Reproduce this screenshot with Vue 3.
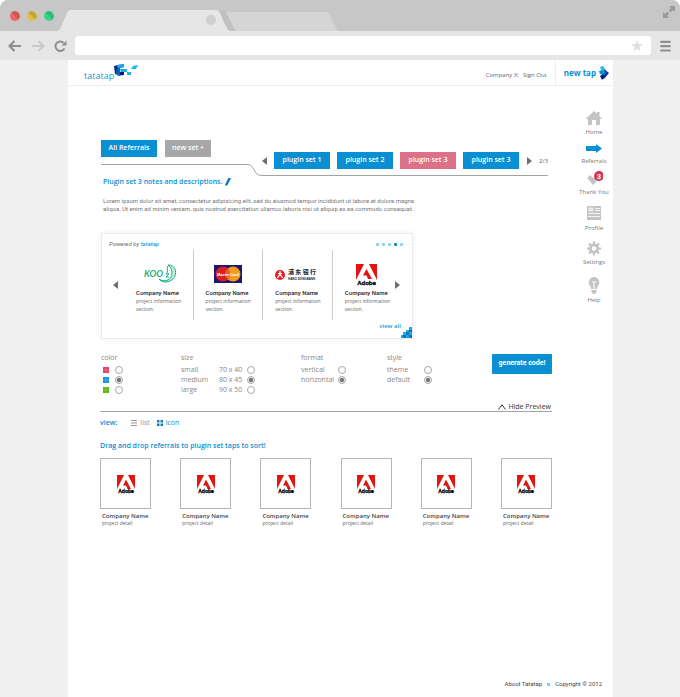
<script setup>
import { ref } from 'vue'

const activeSet = ref(2)
const sets = ['plugin set 1', 'plugin set 2', 'plugin set 3', 'plugin set 3']
const nav = ['home', 'referrals', 'thanks', 'profile', 'settings', 'help']
const navLabels = {
  home: 'Home',
  referrals: 'Referrals',
  thanks: 'Thank You',
  profile: 'Profile',
  settings: 'Settings',
  help: 'Help'
}
const companies = ['koo', 'mastercard', 'bank', 'adobe']
const colors = ['pink', 'blue', 'green']
const color = ref('blue')
const sizes = [
  { name: 'small', dim: '70 x 40' },
  { name: 'medium', dim: '80 x 45' },
  { name: 'large', dim: '90 x 50' }
]
const size = ref('medium')
const format = ref('horizontal')
const look = ref('default')
const address = ref('')
</script>

<template>
  <div class="window">
    <div class="titlebar">
      <div class="lights">
        <svg v-for="c in ['red', 'yellow', 'green']" :key="c" :class="['light', c]" viewBox="0 0 10 10">
          <circle cx="5" cy="5" r="5" />
          <path d="M1.5 1.5A5 5 0 0 1 8.5 8.5Z" fill="#000" opacity=".13" />
        </svg>
      </div>
      <svg class="tabs" viewBox="0 0 282 21">
        <path d="M168 2H269Q272 2 273 5L279 18Q280 21 282 21H168Z" fill="#d5d5d5" />
        <path d="M159 0H165Q168 0 170 4L177 18Q178 21 181 21H172Z" fill="#c1c1c1" />
        <path d="M0 21Q3 20 4 17L10 3Q11 0 14 0H159Q162 0 163 3L169 17Q170 20 173 21Z" fill="#e6e6e6" />
        <circle cx="154" cy="10" r="5" fill="#cfcfcf" />
      </svg>
      <svg class="expand" viewBox="0 0 12 12" fill="#999">
        <path d="M6 0H12V6L10 4L7.800 6.200L5.800 4.200L8 2ZM0 6L2 8L4.200 5.800L6.200 7.800L4 10L6 12H0Z" />
      </svg>
    </div>

    <div class="toolbar">
      <button class="tool" aria-label="Back">
        <svg viewBox="0 0 13 12" fill="none" stroke="#8f8f8f" stroke-width="2.200"><path d="M6.500 1L1.500 6L6.500 11M2 6H13" /></svg>
      </button>
      <button class="tool forward" aria-label="Forward">
        <svg viewBox="0 0 13 12" fill="none" stroke="#cacaca" stroke-width="2.200"><path d="M6.500 1L11.500 6L6.500 11M11 6H0" /></svg>
      </button>
      <button class="tool reload" aria-label="Reload">
        <svg viewBox="0 0 13 12"><path d="M10.500 8.500A4.800 4.800 0 1 1 9.600 2.700" fill="none" stroke="#8f8f8f" stroke-width="2" /><path d="M12.500 .5V5.500H7.500Z" fill="#8f8f8f" /></svg>
      </button>
      <div class="address">
        <input v-model="address" type="text" aria-label="Address" />
        <svg viewBox="0 0 12 12" fill="#dedede"><path d="M6 0L7.500 4.300H12L8.400 7L9.700 11.500L6 8.800L2.300 11.500L3.600 7L0 4.300H4.500Z" /></svg>
      </div>
      <button class="tool menu" aria-label="Menu">
        <svg viewBox="0 0 11 12" stroke="#8f8f8f" stroke-width="2.200" stroke-linecap="round"><path d="M1.200 1.800H9.800M1.200 6.200H9.800M1.200 10.500H9.800" /></svg>
      </button>
    </div>

    <div class="viewport">
      <div class="page">
        <header class="header">
          <a class="logo" href="#">
            <span>tatatap</span>
            <svg viewBox="0 0 25 13">
              <path d="M0 2L4 1L5 11L1 10Z" fill="#10288c" />
              <path d="M4 1L10 0V3L6 4V9L10 8V11L4 12L2 9Z" fill="#0067b8" />
              <path d="M3 1L10 0V3L4 4ZM6 5L11 5V8L7 9Z" fill="#16a9e6" />
              <path d="M9 5H13V8H9ZM13 8H17V11H13Z" fill="#19b4ee" />
              <path d="M6 8H10V11H6Z" fill="#101d75" />
              <path d="M19 2L24 1L22 5H17Z" fill="#22b7ef" />
            </svg>
          </a>
          <div class="account"><span>Company X:</span><a href="#">Sign Out</a></div>
          <a class="newtap" href="#">
            <span>new tap</span>
            <svg viewBox="0 0 10 14">
              <path d="M4 2L10 7L5 13L3 10L5 7Z" fill="#0b3b98" />
              <path d="M1 1L4 0L6 3L3 5Z" fill="#22b7ef" />
              <path d="M0 5L3 4L7 6L5 9L1 8Z" fill="#0090d4" />
              <path d="M1 10L4 8L6 11L3 14Z" fill="#141a70" />
            </svg>
          </a>
        </header>

        <div class="body">
          <main class="main">
            <section class="setbar">
              <div class="groups">
                <button class="btn">All Referrals</button>
                <button class="btn muted">new set +</button>
              </div>
              <svg class="bend" viewBox="0 0 14 13" fill="none" stroke="#a3a3a3"><path d="M0 1.500Q3 1.500 5 5L8 10Q9.500 12.500 14 12.500" /></svg>
              <div class="sets">
                <button class="arrow" aria-label="Previous sets"><svg viewBox="0 0 5 8"><path d="M5 0V8L0 4Z" fill="#6d6e70" /></svg></button>
                <button
                  v-for="(s, i) in sets"
                  :key="i"
                  :class="['btn', 'set', { active: i === activeSet }]"
                  @click="activeSet = i"
                >{{ s }}</button>
                <button class="arrow next" aria-label="Next sets"><svg viewBox="0 0 5 8"><path d="M0 0V8L5 4Z" fill="#6d6e70" /></svg></button>
                <span class="count">2/3</span>
              </div>
            </section>

            <h1 class="title">
              Plugin set 3 notes and descriptions.
              <svg viewBox="0 0 6 8"><path d="M3.500 0H6L2.500 7L0 8L.5 6Z" fill="#0a6fc2" /></svg>
            </h1>
            <p class="notes">
              Lorem ipsum dolor sit amet, consectetur adipisicing elit, sed do eiusmod tempor incididunt ut labore et dolore magna<br />
              aliqua. Ut enim ad minim veniam, quis nostrud exercitation ullamco laboris nisi ut aliquip ex ea commodo consequat.
            </p>

            <section class="card">
              <div class="cardtop">
                <p class="powered">Powered by <b>tatatap</b></p>
                <div class="dots"><i v-for="d in 5" :key="d" :class="{ on: d === 4 }"></i></div>
              </div>
              <div class="carousel">
                <button class="arrow prev" aria-label="Previous"><svg viewBox="0 0 5 8"><path d="M5 0V8L0 4Z" fill="#6d6e70" /></svg></button>
                <article v-for="c in companies" :key="c" class="slide">
                  <div class="inner">
                    <svg v-if="c === 'koo'" class="brand" viewBox="0 0 46 24">
                      <text x="8" y="15" font-size="9" font-weight="700" font-style="italic" fill="#1aae7c" font-family="Lato">KOO</text>
                      <path d="M32 3C43 3 42 19 30 20C26 20 24 18 23 17C28 21 36 18 36 11C36 8 35 5 32 3Z" fill="#c9f0e0" stroke="#12ae79" />
                      <path d="M32 4C30 7 33 9 30 12H33L30 15H33" fill="none" stroke="#12ae79" />
                    </svg>
                    <svg v-else-if="c === 'mastercard'" class="brand" viewBox="0 0 46 24">
                      <rect x="8" y="3" width="28" height="18" fill="#191970" />
                      <circle cx="17" cy="12" r="7.500" fill="#dc1e26" />
                      <circle cx="27" cy="12" r="7.500" fill="#f59b1c" />
                      <path d="M22 6.400A7.500 7.500 0 0 1 22 17.600A7.500 7.500 0 0 1 22 6.400Z" fill="#e9641f" />
                      <text x="22" y="14" text-anchor="middle" font-size="4" font-weight="700" fill="#fff" font-family="Liberation Sans">MasterCard</text>
                    </svg>
                    <svg v-else-if="c === 'bank'" class="brand" viewBox="0 0 46 24">
                      <circle cx="5" cy="13" r="5" fill="#ed1c24" />
                      <path d="M5 9V12M5 12L2.500 16M5 12L7.500 16M3 11.500H7" stroke="#fff" stroke-width="1.200" fill="none" />
                      <text x="13" y="12" font-size="6" font-weight="700" fill="#222" font-family="Noto Sans CJK SC">浦 东 银 行</text>
                      <text x="13" y="18" font-size="3" font-weight="700" fill="#222" font-family="Liberation Sans">HANG DONGBANK</text>
                    </svg>
                    <svg v-else class="brand" viewBox="0 0 46 24">
                      <path d="M11 2H19L11 18ZM24 2H32V18ZM21.500 7L27 17H23L21.500 13.500H18Z" fill="#e3140f" />
                      <text x="21.500" y="23" text-anchor="middle" font-size="6" font-weight="900" fill="#000" stroke="#000" stroke-width=".3" font-family="Liberation Sans">Adobe</text>
                    </svg>
                    <h2>Company Name</h2>
                    <p>project information<br />section.</p>
                  </div>
                </article>
                <button class="arrow" aria-label="Next"><svg viewBox="0 0 5 8"><path d="M0 0V8L5 4Z" fill="#6d6e70" /></svg></button>
              </div>
              <div class="cardfoot">
                <a href="#">view all</a>
                <svg viewBox="0 0 11 11">
                  <path d="M8 0H11V11H0V8H2V5H5V3H8Z" fill="#22a9e2" />
                  <path d="M5 5H8V8H5ZM8 3H11V5H8ZM2 8H5V11H2ZM8 8H11V11H8Z" fill="#0b76bd" />
                </svg>
              </div>
            </section>

            <section class="options">
              <fieldset>
                <legend>color</legend>
                <label v-for="c in colors" :key="c" class="row colorrow">
                  <svg :class="['swatch', c]" viewBox="0 0 6 6"><rect width="6" height="6" /><path d="M3 0V6M0 3H6" stroke="#fff" stroke-width=".5" opacity=".4" /></svg>
                  <input v-model="color" type="radio" name="color" :value="c" :aria-label="c" />
                </label>
              </fieldset>
              <fieldset>
                <legend>size</legend>
                <label v-for="s in sizes" :key="s.name" class="row sizerow">
                  <span>{{ s.name }}</span><span>{{ s.dim }}</span>
                  <input v-model="size" type="radio" name="size" :value="s.name" />
                </label>
              </fieldset>
              <fieldset>
                <legend>format</legend>
                <label v-for="f in ['vertical', 'horizontal']" :key="f" class="row">
                  <span>{{ f }}</span><input v-model="format" type="radio" name="format" :value="f" />
                </label>
              </fieldset>
              <fieldset>
                <legend>style</legend>
                <label v-for="l in ['theme', 'default']" :key="l" class="row">
                  <span>{{ l }}</span><input v-model="look" type="radio" name="look" :value="l" />
                </label>
              </fieldset>
              <button class="btn generate">generate code!</button>
            </section>

            <div class="previewbar">
              <button class="hide">
                <svg viewBox="0 0 8 6" fill="none" stroke="#333"><path d="M.5 5.500L4 .8L7.500 5.500" /></svg>
                Hide Preview
              </button>
            </div>

            <div class="view">
              <b>view:</b>
              <button>
                <svg viewBox="0 0 6 6" stroke="#999"><path d="M0 .5H6M0 3H6M0 5.500H6" /></svg>
                list
              </button>
              <button class="on">
                <svg viewBox="0 0 6 6" fill="#0b7cc4"><path d="M0 0H2.500V2.500H0ZM3.500 0H6V2.500H3.500ZM0 3.500H2.500V6H0ZM3.500 3.500H6V6H3.500Z" /></svg>
                icon
              </button>
            </div>

            <p class="hint">Drag and drop referrals to plugin set taps to sort!</p>

            <ul class="tiles">
              <li v-for="t in 6" :key="t">
                <div class="tile">
                  <svg viewBox="0 0 20 20">
                    <path d="M1 1H8L1 15ZM12 1H19V15ZM10 5.500L15 15H11.500L10 11.500H7Z" fill="#e3140f" />
                    <text x="10" y="19" text-anchor="middle" font-size="5" font-weight="900" fill="#000" stroke="#000" stroke-width=".3" font-family="Liberation Sans">Adobe</text>
                  </svg>
                </div>
                <h3>Company Name</h3>
                <p>project detail</p>
              </li>
            </ul>
          </main>

          <nav class="nav">
            <a v-for="n in nav" :key="n" href="#">
              <svg v-if="n === 'home'" class="h15" viewBox="0 0 18 15" fill="#c4c4c4"><path d="M9 0L12 2.800V1H14.500V5.200L17.500 8H15V14H11V9H7V14H3V8H.5Z" /></svg>
              <svg v-else-if="n === 'referrals'" class="h13" viewBox="0 0 18 13" fill="#0a8fd3"><path d="M1 4H11V2L17 6.500L11 11V9H1Z" /></svg>
              <svg v-else-if="n === 'thanks'" class="h15" viewBox="0 0 18 15">
                <path d="M2 7L5 4L8 7L12 3L15 7L8 14Z" fill="#c4c4c4" />
                <circle cx="14" cy="5" r="5" fill="#da3455" />
                <text x="14" y="7.500" text-anchor="middle" font-size="7" font-weight="700" fill="#fff" font-family="Roboto">3</text>
              </svg>
              <svg v-else-if="n === 'profile'" class="h20" viewBox="0 0 18 20">
                <path d="M2 4H16V18H2Z" fill="#c4c4c4" /><path d="M3 11.500H15M3 14.500H15M10 6.500H15M10 8.500H15" stroke="#fff" stroke-width=".8" /><path d="M3.500 5.500H8.500V9.500H3.500Z" fill="#e8e8e8" />
              </svg>
              <svg v-else-if="n === 'settings'" class="h18" viewBox="0 0 18 18">
                <circle cx="9" cy="10.500" r="3.700" fill="none" stroke="#c4c4c4" stroke-width="2.800" />
                <path d="M9 3.500V6M9 15V17.500M2 10.500H4.500M13.500 10.500H16M4 5.500L6 7.500M12 13.500L14 15.500M14 5.500L12 7.500M6 13.500L4 15.500" stroke="#c4c4c4" stroke-width="2.200" />
              </svg>
              <svg v-else class="h22" viewBox="0 0 18 22">
                <path d="M9 5A5.500 5.500 0 0 1 12.500 14.500L12 17H6L5.500 14.500A5.500 5.500 0 0 1 9 5ZM6.500 18H11.500V20L10 22H8L6.500 20Z" fill="#c4c4c4" />
                <path d="M9 17V11M7 9L9 11L11 9" fill="none" stroke="#fff" />
              </svg>
              <span>{{ navLabels[n] }}</span>
            </a>
          </nav>
        </div>

        <footer class="footer">
          <a href="#">About Tatatap</a><i></i><span>Copyright © 2012</span>
        </footer>
      </div>
    </div>
  </div>
</template>

<style>
body {
  background: #fff;
}
</style>

<style scoped>
* {
  box-sizing: border-box;
}
.window {
  display: flex;
  flex-direction: column;
  min-height: 100vh;
  border-radius: 8px 8px 0 0;
  overflow: hidden;
  background: #f0f0f0;
  font-family: "Open Sans", "Liberation Sans", sans-serif;
  font-size: 7px;
  line-height: 8px;
  color: #666;
}
button {
  padding: 0;
  border: 0;
  background: none;
  font: inherit;
  color: inherit;
  cursor: pointer;
}
a {
  color: inherit;
  text-decoration: none;
}
h1, h2, h3, p, ul, fieldset {
  margin: 0;
  padding: 0;
}
svg {
  display: block;
  flex: none;
}
.titlebar {
  display: flex;
  align-items: flex-end;
  height: 31px;
  padding: 0 5px 0 10px;
  background: #c7c7c7;
}
.lights {
  display: flex;
  gap: 7px;
  width: 47px;
  padding-bottom: 10px;
}
.light {
  width: 10px;
}
.red { fill: #ec6662; }
.yellow { fill: #e2be44; }
.green { fill: #36d68a; }
.tabs {
  width: 282px;
  height: 21px;
}
.expand {
  width: 12px;
  height: 12px;
  margin: 6px 0 auto auto;
}
.toolbar {
  display: flex;
  align-items: center;
  height: 29px;
  padding: 0 8px;
  background: #e6e6e6;
}
.tool svg {
  width: 13px;
  height: 12px;
}
.forward {
  margin-left: 11px;
}
.reload {
  margin: 0 8px 0 9px;
}
.menu {
  margin-left: 8px;
}
.address {
  display: flex;
  flex: 1;
  align-items: center;
  height: 19px;
  padding-right: 8px;
  border-radius: 3px;
  background: #fff;
}
.address input {
  flex: 1;
  min-width: 0;
  border: 0;
  outline: 0;
  background: none;
  font: inherit;
}
.address svg {
  width: 12px;
}
.viewport {
  display: flex;
  flex: 1;
  padding: 0 67px 0 68px;
}
.page {
  display: flex;
  flex: 1;
  flex-direction: column;
  min-width: 0;
  background: #fff;
}
.header {
  display: flex;
  height: 26px;
  border-bottom: 1px solid #eee;
}
.logo {
  display: flex;
  padding: 4px 0 0 16px;
  font-size: 9px;
  line-height: 12px;
  color: #1d96cf;
}
.logo span {
  padding-top: 6px;
}
.logo svg {
  width: 25px;
  height: 13px;
}
.account {
  display: flex;
  gap: 4px;
  align-items: center;
  margin-left: auto;
  padding: 4px 8px 0 0;
  font-size: 6px;
}
.newtap {
  display: flex;
  align-items: center;
  gap: 3px;
  padding: 0 4px 0 8px;
  border-left: 1px solid #eee;
  font-size: 8px;
  font-weight: 700;
  color: #0a8fd3;
}
.newtap svg {
  width: 10px;
  height: 14px;
}
.body {
  display: flex;
  gap: 23px;
  padding-left: 32px;
}
.main {
  flex: 1;
  min-width: 0;
  padding-top: 54px;
}
.setbar {
  display: flex;
  align-items: flex-start;
  padding: 0 4px 0 1px;
}
.groups {
  display: flex;
  flex: none;
  gap: 8px;
  width: 147px;
  height: 25px;
  border-bottom: 1px solid #a3a3a3;
}
.bend {
  width: 14px;
  height: 13px;
  margin-top: 23px;
}
.btn {
  flex: none;
  height: 17px;
  width: 56px;
  padding-bottom: 2px;
  background: #0a8fd3;
  color: #fff;
  font-weight: 600;
  white-space: nowrap;
}
.btn.muted {
  width: 46px;
  background: #a7a7a7;
}
.btn.active {
  background: #dc7187;
}
.sets {
  display: flex;
  flex: 1;
  align-items: flex-end;
  gap: 7px;
  min-width: 0;
  height: 36px;
  padding-bottom: 6px;
  border-bottom: 1px solid #a3a3a3;
}
.sets .arrow {
  padding-bottom: 4px;
}
.sets .next {
  padding-left: 1px;
}
.count {
  padding-bottom: 4px;
  font-size: 6px;
}
.arrow svg {
  width: 5px;
  height: 8px;
}
.title {
  display: flex;
  gap: 3px;
  align-items: center;
  padding: 2px 3px;
  font-size: 7px;
  font-weight: 600;
  color: #0a8fd3;
}
.title svg {
  width: 6px;
}
.notes {
  padding: 9px 3px 0;
  font-family: Roboto, sans-serif;
  font-size: 6px;
  color: #777;
  white-space: nowrap;
}
.card {
  width: 69%;
  margin: 20px 0 0 1px;
  border: 1px solid #ececec;
  box-shadow: 0 0 5px #eee;
}
.cardtop {
  display: flex;
  align-items: center;
  justify-content: space-between;
  padding: 6px 9px 0 7px;
}
.powered {
  font-family: Roboto, sans-serif;
  font-size: 6px;
  font-style: italic;
}
.powered b {
  font-weight: 500;
  color: #1ba2de;
}
.dots {
  display: flex;
  gap: 3px;
}
.dots i {
  width: 3px;
  height: 3px;
  border-radius: 1px;
  background: #8ad3f3;
}
.dots .on {
  background: #0a8fd3;
}
.carousel {
  display: flex;
  align-items: center;
  padding: 2px 12px 0 11px;
}
.prev {
  margin-right: 6px;
}
.slide {
  flex: 69;
  min-width: 0;
  height: 70px;
  padding: 12px 0 0 12px;
  border-right: 1px solid #ccc;
}
.slide:last-of-type {
  flex: 61;
  border-right: 0;
}
.inner {
  width: 46px;
}
.brand {
  width: 46px;
  height: 24px;
}
.slide h2 {
  padding-top: 3px;
  font-family: Roboto, sans-serif;
  font-size: 6px;
  font-weight: 500;
  color: #222;
  white-space: nowrap;
}
.slide p {
  font-size: 5px;
  white-space: nowrap;
}
.cardfoot {
  display: flex;
  justify-content: flex-end;
  align-items: flex-end;
  height: 18px;
  color: #1b9bdb;
  font-size: 6px;
  font-weight: 600;
}
.cardfoot a {
  padding-bottom: 8px;
}
.cardfoot svg {
  width: 11px;
}
.options {
  display: grid;
  grid-template-columns: 80fr 120fr 86fr 105fr 60fr;
  align-items: start;
  padding: 15px 0 0 1px;
  color: #888;
}
fieldset {
  min-width: 0;
  border: 0;
}
legend {
  padding: 0;
  margin-bottom: 3px;
}
.row {
  display: grid;
  grid-template-columns: 37px 8px;
  align-items: center;
  height: 10px;
}
.colorrow {
  grid-template-columns: 12px 8px;
  padding-left: 2px;
}
.sizerow {
  grid-template-columns: 38px 28px 8px;
}
.swatch {
  width: 6px;
}
.swatch.pink { fill: #e83e63; }
.swatch.blue { fill: #0a96da; }
.swatch.green { fill: #5cb60f; }
input[type="radio"] {
  appearance: none;
  width: 8px;
  height: 8px;
  margin: 0;
  border: 1px solid #a8a8a8;
  border-radius: 50%;
  background: #fff;
}
input[type="radio"]:checked {
  background: radial-gradient(circle, #777 40%, #eee 60%);
}
.generate {
  width: 100%;
  height: 20px;
  border-radius: 1px;
  font-family: Roboto, sans-serif;
  font-weight: 700;
}
.previewbar {
  display: flex;
  justify-content: flex-end;
  margin-top: 8px;
  padding-right: 1px;
  border-bottom: 1px solid #a3a3a3;
}
.hide {
  display: flex;
  gap: 2px;
  align-items: center;
  color: #333;
}
.hide svg {
  width: 8px;
}
.view {
  display: flex;
  align-items: center;
  gap: 7px;
  padding-top: 7px;
  color: #0a8fd3;
}
.view b {
  margin-right: 7px;
  font-weight: 600;
}
.view button {
  display: flex;
  gap: 3px;
  align-items: center;
  color: #999;
}
.view .on {
  color: #0a8fd3;
}
.view svg {
  width: 6px;
}
.hint {
  padding-top: 15px;
  color: #0a8fd3;
  font-weight: 600;
}
.tiles {
  display: flex;
  justify-content: space-between;
  padding-top: 8px;
  list-style: none;
}
.tile {
  display: flex;
  align-items: center;
  justify-content: center;
  width: 51px;
  height: 51px;
  margin-bottom: 3px;
  border: 1px solid #b5b5b5;
}
.tile svg {
  width: 20px;
}
.tiles h3 {
  padding-left: 2px;
  font-size: 6px;
  font-weight: 600;
  color: #444;
}
.tiles p {
  padding-left: 2px;
  font-size: 5px;
  line-height: 7px;
}
.nav {
  display: flex;
  flex: none;
  flex-direction: column;
  gap: 6px;
  width: 38px;
  padding-top: 25px;
}
.nav a {
  display: flex;
  flex-direction: column;
  align-items: center;
  gap: 2px;
  font-size: 6px;
  color: #777;
  white-space: nowrap;
}
.nav svg {
  width: 18px;
}
.h13 { height: 13px; }
.h15 { height: 15px; }
.h18 { height: 18px; }
.h20 { height: 20px; }
.h22 { height: 22px; }
.footer {
  display: flex;
  align-items: center;
  justify-content: flex-end;
  gap: 5px;
  margin-top: auto;
  padding: 0 11px 9px;
  font-family: Roboto, sans-serif;
  font-size: 6px;
  color: #444;
}
.footer i {
  width: 3px;
  height: 3px;
  background: #7fd2f2;
}
</style>
